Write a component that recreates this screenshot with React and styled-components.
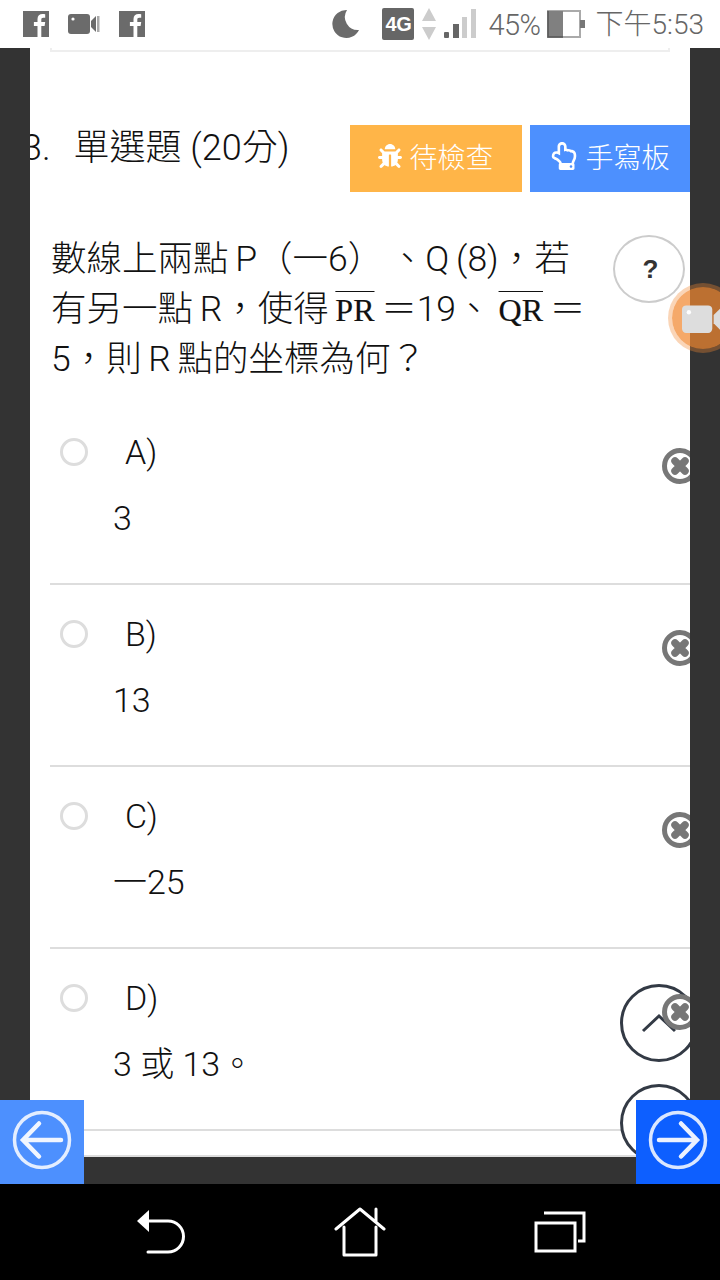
import styled, { createGlobalStyle } from "styled-components";
import { FaBug, FaRegHandPointUp } from "react-icons/fa";

const GlobalStyle = createGlobalStyle`
    html, body {
        margin: 0;
        padding: 0;
        background: #333;
    }
    body {
        font-family: Roboto, "Noto Sans CJK TC", sans-serif;
        font-weight: 300;
        color: #111;
    }
`;

const Screen = styled.div`
    position: relative;
    width: 720px;
    height: 1280px;
    overflow: hidden;
    display: flex;
    flex-direction: column;
    background: #333;
`;

const StatusBar = styled.header`
    height: 48px;
    background: #fff;
    display: flex;
    align-items: center;
    justify-content: space-between;
    padding: 0 16px 0 23px;
    color: #666;
`;

const StatusGroup = styled.div`
    display: flex;
    align-items: center;
    gap: ${(p) => p.$gap || 0}px;
`;

const StatusCluster = styled.div`
    display: flex;
    align-items: center;
    gap: ${(p) => p.$gap}px;
    margin-left: ${(p) => p.$left || 0}px;
`;

const FbSquare = styled.div`
    width: 26px;
    height: 26px;
    background: #6b6b6b;
    overflow: hidden;
`;

const Badge4G = styled.div`
    width: 32px;
    height: 32px;
    border-radius: 2px;
    background: #666;
    color: #fff;
    font-family: "Liberation Sans", sans-serif;
    font-weight: 700;
    font-size: 20px;
    display: flex;
    align-items: center;
    justify-content: center;
    letter-spacing: -0.5px;
`;

const StatusText = styled.span`
    font-size: ${(p) => p.$size}px;
    line-height: 48px;
    letter-spacing: ${(p) => p.$spacing || 0}px;
    margin-top: 2px;
`;

const Stage = styled.div`
    height: 1136px;
    display: flex;
    flex-direction: column;
`;

const Panel = styled.main`
    position: relative;
    margin: 0 30px;
    height: 1107px;
    background: #fff;
    overflow: hidden;
    border-bottom: 2px solid #ddd;
    box-sizing: content-box;
`;

const TopRule = styled.div`
    height: 2px;
    margin: 0 20px;
    border: solid #eee;
    border-width: 0 2px 2px;
    box-sizing: content-box;
`;

const HeadingRow = styled.div`
    margin-top: 73px;
    display: flex;
    align-items: flex-start;
    justify-content: space-between;
`;

const Title = styled.h2`
    margin: 0 0 0 -8px;
    font-size: 36px;
    line-height: 46px;
    font-weight: 300;
    color: #111;
    white-space: pre;
`;

const TitleGap = styled.span`
    display: inline-block;
    width: 23px;
`;

const HeadingActions = styled.div`
    display: flex;
    gap: 8px;
`;

const ActionButton = styled.button`
    height: 67px;
    width: ${(p) => p.$width}px;
    border: 0;
    padding: 0 0 6px;
    background: ${(p) => p.$color};
    color: #fff;
    font-family: inherit;
    font-weight: 300;
    font-size: 28px;
    display: flex;
    align-items: center;
    justify-content: center;
    gap: 7px;

    svg {
        font-size: ${(p) => p.$icon}px;
    }
`;

const QuestionRow = styled.section`
    margin-top: 43px;
    padding: 0 5px 0 21px;
    display: flex;
    align-items: flex-start;
    justify-content: space-between;
`;

const QuestionText = styled.div`
    font-size: 35.5px;
    line-height: 49.5px;
    word-spacing: -2px;
    color: #111;
    white-space: pre;
`;

const Overbar = styled.span`
    font-family: "Liberation Serif", serif;
    font-weight: 400;
    font-size: 32px;
    color: #111;
    text-decoration: overline;
    text-decoration-thickness: 1px;
    -webkit-text-stroke: 0.2px #111;
    margin-left: ${(p) => p.$left || 0}px;
`;

const HelpButton = styled.button`
    width: 72px;
    height: 68px;
    border: 2px solid #ccc;
    border-radius: 50%;
    background: #fff;
    color: #333;
    font-family: "Liberation Sans", sans-serif;
    font-weight: 700;
    font-size: 26px;
    padding: 0 0 0 3px;
`;

const OptionList = styled.ul`
    list-style: none;
    margin: 18px 0 0 20px;
    padding: 0;
`;

const OptionRow = styled.li`
    height: 180px;
    border-bottom: 2px solid #ddd;
    display: flex;
    align-items: flex-start;
    justify-content: space-between;
`;

const OptionBody = styled.div`
    padding: 27px 0 0 10px;
    display: flex;
    flex-direction: column;
`;

const OptionHead = styled.div`
    display: flex;
    align-items: center;
    gap: 37px;
    height: 44px;
`;

const Radio = styled.span`
    width: 28px;
    height: 28px;
    box-sizing: border-box;
    border: 3px solid #ddd;
    border-radius: 50%;
    background: #fff;
`;

const OptionLabel = styled.span`
    font-size: 34px;
    color: #111;
`;

const OptionValue = styled.div`
    margin: 22px 0 0 53px;
    font-size: 34px;
    line-height: 44px;
    color: #111;
`;

const RemoveMark = styled.svg`
    position: relative;
    z-index: 3;
    width: 36px;
    height: 36px;
    margin: 45px -8px 0 0;
    flex: none;
`;

const ScrollCircle = styled.div`
    position: absolute;
    z-index: 2;
    left: 590px;
    top: ${(p) => p.$top}px;
    width: 78px;
    height: 78px;
    box-sizing: border-box;
    border: 3px solid #333a45;
    border-radius: 50%;
    background: #fff;
    display: flex;
    align-items: center;
    justify-content: center;
`;

const BottomGap = styled.div`
    flex: 1;
`;

const NavBar = styled.nav`
    height: 96px;
    background: #000;
    display: flex;
    align-items: center;
    justify-content: space-between;
    padding: 0 134px 0 137px;
`;

const VideoOrb = styled.div`
    position: absolute;
    z-index: 5;
    left: 668px;
    top: 283px;
    width: 70px;
    height: 70px;
    box-sizing: border-box;
    border: 4px solid rgba(241, 136, 48, 0.35);
    border-radius: 50%;
    background: rgba(241, 136, 48, 0.72);
    background-clip: padding-box;
    padding: 17px 0 0 10px;
`;

const PageArrow = styled.button`
    position: absolute;
    z-index: 6;
    top: 1100px;
    ${(p) => (p.$side === "left" ? "left: 0;" : "right: 0;")}
    width: 84px;
    height: 84px;
    border: 0;
    padding: 0 0 4px;
    background: ${(p) => p.$color};
    display: flex;
    align-items: center;
    justify-content: center;
`;

const FbIcon = () => (
    <FbSquare>
        <svg width="26" height="26" viewBox="0 0 26 26">
            <path
                d="M14.5 26V15h-3.6v-4h3.6V8c0-3.4 2-5 5-5 1.3 0 2.4.1 2.7.2v3.6h-2c-1.5 0-1.9.8-1.9 1.9V11h3.9l-.6 4h-3.3v11z"
                fill="#fff"
            />
        </svg>
    </FbSquare>
);

const VideoIcon = ({ width = 32, fill = "#6b6b6b", slit = "#aaa" }) => (
    <svg width={width} height={(width * 22) / 32} viewBox="0 0 32 22">
        <rect x="0" y="1" width="22" height="20" rx="3" fill={fill} />
        <circle cx="5" cy="6" r="1.6" fill="#fff" />
        <path d="M23 8l5-5v16l-5-5z" fill={fill} />
        <rect x="29" y="3" width="2.5" height="16" fill={slit} />
    </svg>
);

const MoonIcon = () => (
    <svg width="30" height="30" viewBox="0 0 30 30">
        <path d="M17 1a14 14 0 1 0 12 20A13 13 0 0 1 17 1z" fill="#6b6b6b" />
    </svg>
);

const DataArrows = () => (
    <svg width="14" height="32" viewBox="0 0 14 32">
        <path d="M7 0l7 13H0z" fill="#ccc" />
        <path d="M7 32l7-13H0z" fill="#ccc" />
    </svg>
);

const SignalBars = () => (
    <svg width="32" height="30" viewBox="0 0 32 30">
        <rect x="0" y="23" width="5" height="6" rx="1" fill="#666" />
        <rect x="9" y="15" width="6" height="14" fill="#666" />
        <rect x="18" y="8" width="5" height="21" fill="#ccc" />
        <rect x="27" y="0" width="5" height="29" fill="#ccc" />
    </svg>
);

const BatteryIcon = () => (
    <svg width="38" height="28" viewBox="0 0 38 28">
        <rect x="1" y="1" width="32" height="26" fill="#fff" stroke="#aaa" strokeWidth="2" />
        <rect x="1" y="1" width="15" height="26" fill="#808080" />
        <path d="M1 1v26h15" fill="none" stroke="#555" strokeWidth="1.5" />
        <rect x="33" y="10" width="5" height="8" fill="#777" />
    </svg>
);

const RemoveIcon = () => (
    <RemoveMark viewBox="0 0 36 36">
        <circle cx="18" cy="18" r="15.5" fill="#fff" stroke="#777" strokeWidth="5" />
        <path d="M13 13l10 10M23 13l-10 10" stroke="#777" strokeWidth="7.5" strokeLinecap="round" />
    </RemoveMark>
);

const ArrowCircle = ({ flip }) => (
    <svg width="60" height="60" viewBox="0 0 60 60" style={flip ? { transform: "scaleX(-1)" } : undefined}>
        <circle cx="30" cy="30" r="27.5" fill="none" stroke="#fff" strokeOpacity="0.85" strokeWidth="3.5" />
        <path
            d="M49 30H12M27 13.5L11 30l16 16.5"
            fill="none"
            stroke="#fff"
            strokeOpacity="0.92"
            strokeWidth="4.5"
            strokeLinecap="round"
        />
    </svg>
);

const options = [
    { label: "A)", value: "3" },
    { label: "B)", value: "13" },
    { label: "C)", value: "一25" },
    { label: "D)", value: "3 或 13。" },
];

function App() {
    return (
        <Screen>
            <GlobalStyle />
            <StatusBar>
                <StatusGroup $gap={19}>
                    <FbIcon />
                    <VideoIcon />
                    <FbIcon />
                </StatusGroup>
                <StatusGroup>
                    <MoonIcon />
                    <StatusCluster $gap={8} $left={22}>
                        <Badge4G>4G</Badge4G>
                        <DataArrows />
                        <SignalBars />
                    </StatusCluster>
                    <StatusCluster $gap={6} $left={12}>
                        <StatusText $size={29} $spacing={-0.5}>45%</StatusText>
                        <BatteryIcon />
                    </StatusCluster>
                    <StatusCluster $gap={0} $left={11}>
                        <StatusText $size={28}>下午5:53</StatusText>
                    </StatusCluster>
                </StatusGroup>
            </StatusBar>

            <Stage>
                <Panel>
                    <TopRule />
                    <HeadingRow>
                        <Title>
                            3.
                            <TitleGap />
                            單選題 (20分)
                        </Title>
                        <HeadingActions>
                            <ActionButton $width={172} $color="#ffb548" $icon={24}>
                                <FaBug />
                                待檢查
                            </ActionButton>
                            <ActionButton $width={160} $color="#4d90fe" $icon={28}>
                                <FaRegHandPointUp />
                                手寫板
                            </ActionButton>
                        </HeadingActions>
                    </HeadingRow>

                    <QuestionRow>
                        <QuestionText>
                            {"數線上兩點 P（一6） 、Q (8)，若\n有另一點 R，使得 "}
                            <Overbar>PR</Overbar>
                            {" ＝19、"}
                            <Overbar $left={7}>QR</Overbar>
                            {" ＝\n5，則 R 點的坐標為何？"}
                        </QuestionText>
                        <HelpButton>?</HelpButton>
                    </QuestionRow>

                    <OptionList>
                        {options.map((option) => (
                            <OptionRow key={option.label}>
                                <OptionBody>
                                    <OptionHead>
                                        <Radio />
                                        <OptionLabel>{option.label}</OptionLabel>
                                    </OptionHead>
                                    <OptionValue>{option.value}</OptionValue>
                                </OptionBody>
                                <RemoveIcon />
                            </OptionRow>
                        ))}
                    </OptionList>

                    <ScrollCircle $top={936}>
                        <svg width="36" height="20" viewBox="0 0 36 20">
                            <path d="M2 18L18 3l16 15" fill="none" stroke="#333a45" strokeWidth="3" />
                        </svg>
                    </ScrollCircle>
                    <ScrollCircle $top={1036} />
                </Panel>
                <BottomGap />
            </Stage>

            <NavBar>
                <svg width="48" height="44" viewBox="0 0 48 44">
                    <path d="M0 11L12 0v22z" fill="#fff" />
                    <path d="M10 11h21a15.5 15.5 0 0 1 0 31H11" fill="none" stroke="#fff" strokeWidth="3" strokeLinecap="round" />
                </svg>
                <svg width="52" height="50" viewBox="0 0 52 50">
                    <path d="M2 22L26 2l24 20M42 14V2M10 20v28h32V20" fill="none" stroke="#fff" strokeWidth="3" strokeLinecap="round" strokeLinejoin="round" />
                </svg>
                <svg width="52" height="42" viewBox="0 0 52 42">
                    <path d="M10 2h40v28h-6" fill="none" stroke="#fff" strokeWidth="3" />
                    <rect x="2" y="12" width="39" height="28" fill="none" stroke="#fff" strokeWidth="3" />
                </svg>
            </NavBar>

            <VideoOrb>
                <VideoIcon width={44} fill="#ddd" slit="#bbb" />
            </VideoOrb>
            <PageArrow $side="left" $color="#4d90fe">
                <ArrowCircle />
            </PageArrow>
            <PageArrow $side="right" $color="#0d5fff">
                <ArrowCircle flip />
            </PageArrow>
        </Screen>
    );
}

export default App;
